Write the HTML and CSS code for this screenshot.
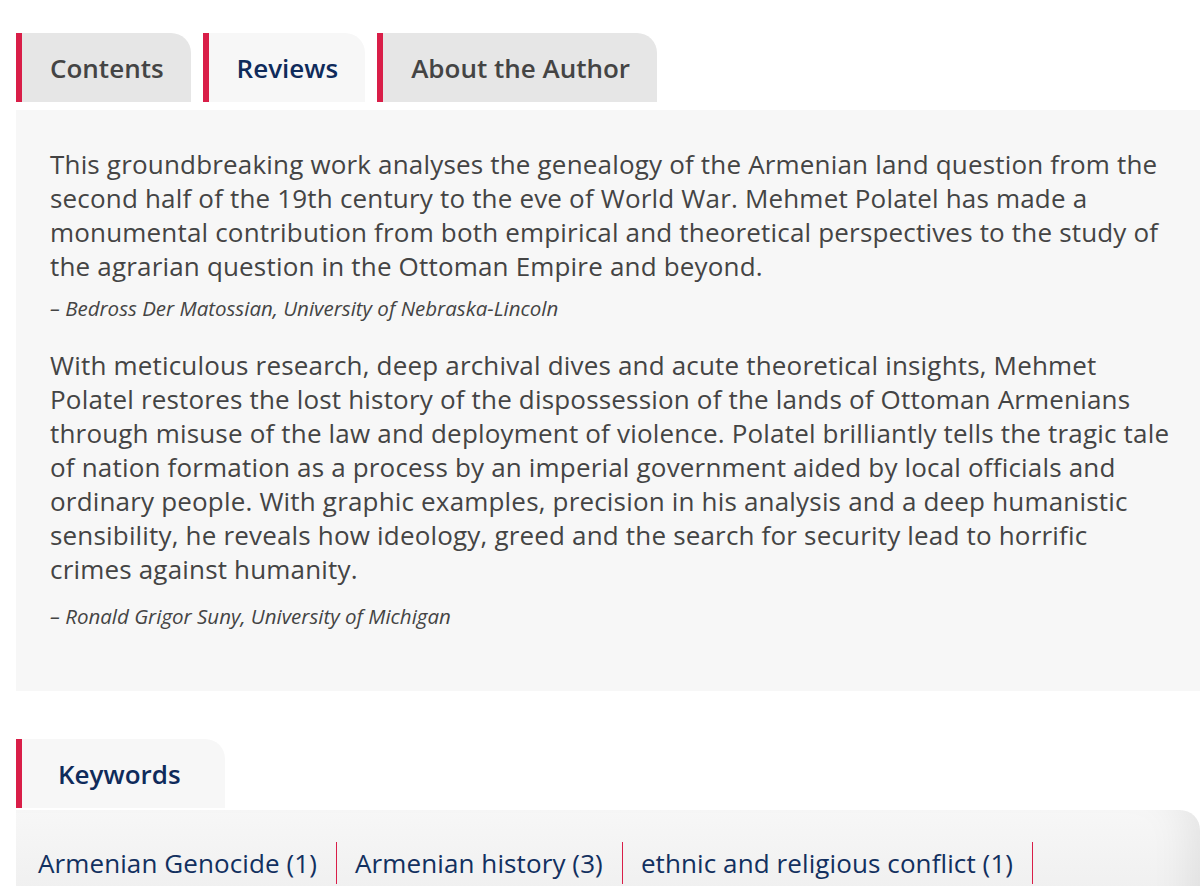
FILE: index.html
```html
<!DOCTYPE html>
<html lang="en">
<head>
    <meta charset="UTF-8">
    <meta name="viewport" content="width=device-width, initial-scale=1.0">
    <title>Book details - Reviews</title>
    <link rel="stylesheet" href="styles.css">
</head>
<body>
    <div class="page">
        <ul class="tabs">
            <li class="tab">Contents</li>
            <li class="tab active">Reviews</li>
            <li class="tab">About the Author</li>
        </ul>

        <div class="panel">
            <p class="review">
                This groundbreaking work analyses the genealogy of the Armenian land question from the
                second half of the 19th century to the eve of World War. Mehmet Polatel has made a
                monumental contribution from both empirical and theoretical perspectives to the study of
                the agrarian question in the Ottoman Empire and beyond.
                <span class="cite">– Bedross Der Matossian, University of Nebraska-Lincoln</span>
            </p>
            <p class="review">
                With meticulous research, deep archival dives and acute theoretical insights, Mehmet
                Polatel restores the lost history of the dispossession of the lands of Ottoman Armenians
                through misuse of the law and deployment of violence. Polatel brilliantly tells the tragic tale
                of nation formation as a process by an imperial government aided by local officials and
                ordinary people. With graphic examples, precision in his analysis and a deep humanistic
                sensibility, he reveals how ideology, greed and the search for security lead to horrific
                crimes against humanity.
                <span class="cite">– Ronald Grigor Suny, University of Michigan</span>
            </p>
        </div>

        <div class="keywords">
            <div class="tab active keywords-tab">Keywords</div>
            <ul class="keyword-list">
                <li><a href="#">Armenian Genocide (1)</a></li>
                <li><a href="#">Armenian history (3)</a></li>
                <li><a href="#">ethnic and religious conflict (1)</a></li>
            </ul>
        </div>
    </div>
</body>
</html>
```

FILE: styles.css
```css
body {
    margin: 0;
    font-family: 'Open Sans', 'Noto Sans', sans-serif;
    background: #fff;
    color: #444;
    overflow: hidden;
}

.page {
    padding: 33px 0 0 16px;
}

.tabs {
    display: flex;
    gap: 12px;
    list-style: none;
    margin: 0;
    padding: 0;
}

.tab {
    height: 69px;
    display: flex;
    align-items: center;
    padding: 0 27px 0 28px;
    background: #e6e6e6;
    border-left: 6px solid #d91e48;
    border-top-right-radius: 20px;
    font-size: 26px;
    font-weight: 600;
    color: #444;
    box-sizing: border-box;
}

.tab.active {
    background: #f7f7f7;
    color: #0f2b5b;
}

.panel {
    margin-top: 8px;
    background: #f7f7f7;
    padding: 37px 24px 58px 34px;
    height: 581px;
    box-sizing: border-box;
}

.review {
    margin: 0 0 26px;
    font-size: 26px;
    letter-spacing: 0.18px;
    line-height: 34px;
}

.cite {
    display: block;
    margin-top: 11px;
    font-size: 20.5px;
    letter-spacing: 0;
    line-height: 28px;
    font-style: italic;
}

.review + .review .cite {
    margin-top: 16px;
}

.keywords {
    margin-top: 48px;
}

.keywords-tab {
    display: inline-flex;
    padding: 0 44px 0 36px;
}

.keyword-list {
    display: flex;
    list-style: none;
    margin: 2px 0 0;
    padding: 32px 0 40px 4px;
    background: linear-gradient(180deg, #f7f7f7 0%, #ededed 100%);
    border-top-right-radius: 20px;
    box-shadow: inset -40px 0 40px -30px rgba(0, 0, 0, 0.08);
}

.keyword-list li {
    padding: 4px 19px 4px 18px;
    border-right: 1px solid #d91e48;
    font-size: 26px;
    letter-spacing: 0.1px;
    line-height: 34px;
}

.keyword-list a {
    color: #12305f;
    text-decoration: none;
}
```
